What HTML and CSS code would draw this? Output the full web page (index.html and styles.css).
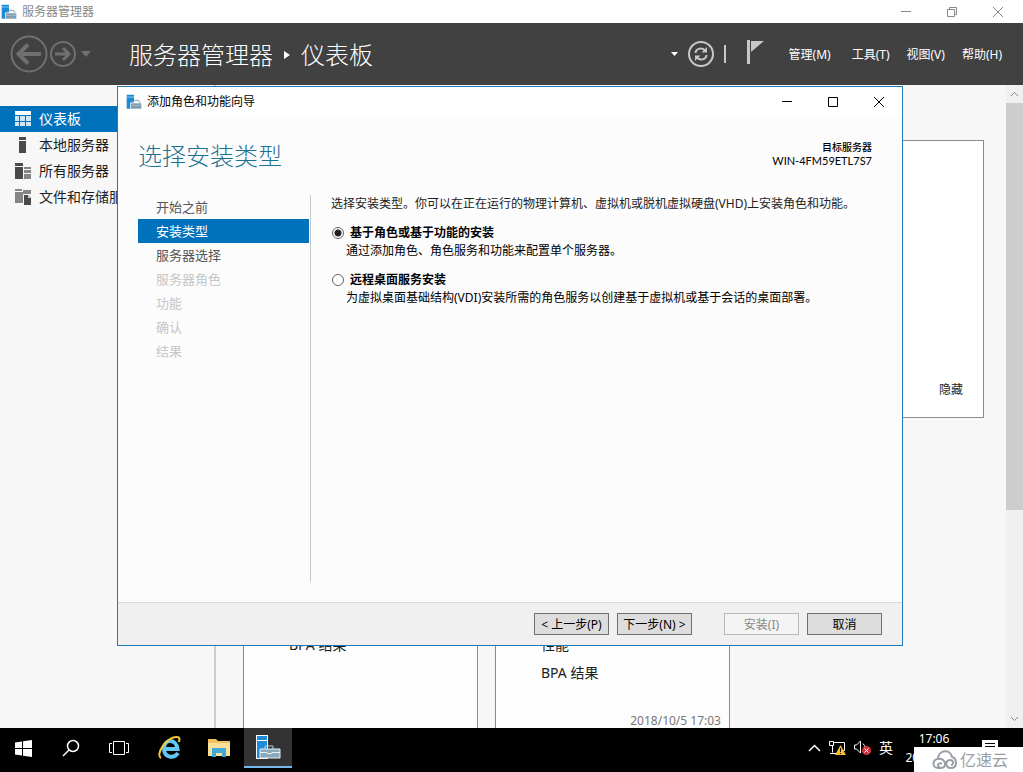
FILE: index.html
```html
<!DOCTYPE html>
<html lang="zh-CN">
<head>
<meta charset="utf-8">
<title>服务器管理器</title>
<link rel="stylesheet" href="styles.css">
</head>
<body>
<svg class="defs" width="0" height="0" aria-hidden="true">
  <symbol id="server-kit" viewBox="0 0 24 24">
    <path d="M1 1h11v3H1z M1 5h11v8H8v9H1z" fill="#1d8bd8"/>
    <path d="M9 11h1v3h-1z" fill="#9fd3f5"/>
    <path d="M10 13.500q1-4 4-4h3q3 0 4 4" fill="none" stroke="#7b98ac" stroke-width="1.500"/>
    <path d="M6 13h18v10H6z" fill="#fff"/>
    <path d="M7 14h16v8H7z" fill="#7b9bb1"/>
    <path d="M7 17h6v1h4v-1h6" fill="none" stroke="#b9cdd9"/>
  </symbol>
</svg>
<div class="manager">
  <header class="titlebar">
    <svg class="app-icon" viewBox="0 0 24 24"><use href="#server-kit"/></svg>
    <span class="titlebar-name">服务器管理器</span>
    <button class="win-button" aria-label="最小化"><svg viewBox="0 0 12 12"><path d="M1 5.500h10"/></svg></button>
    <button class="win-button" aria-label="还原"><svg viewBox="0 0 12 12"><path d="M1.500 3.500h7v7h-7z M3.500 3.500v-2h7v7h-2"/></svg></button>
    <button class="win-button" aria-label="关闭"><svg viewBox="0 0 12 12"><path d="M1 1l10 10M11 1L1 11"/></svg></button>
  </header>
  <div class="banner">
    <div class="history">
      <button class="icon-button" aria-label="后退"><svg width="38" height="38" viewBox="0 0 38 38" fill="none" stroke="#707070"><circle cx="19" cy="19" r="17.500" stroke-width="2"/><path d="M31 19H9M18 9.500L8.500 19l9.500 9.500" stroke-width="4"/></svg></button>
      <button class="icon-button" aria-label="前进"><svg width="26" height="26" viewBox="0 0 26 26" fill="none" stroke="#707070"><circle cx="13" cy="13" r="12" stroke-width="2"/><path d="M5 13h14M13 7l6 6-6 6" stroke-width="3"/></svg></button>
      <button class="icon-button" aria-label="历史记录"><svg width="10" height="6" viewBox="0 0 10 6"><path d="M0 0h10L5 6z" fill="#707070"/></svg></button>
    </div>
    <h1 class="crumbs"><span>服务器管理器</span><svg width="6" height="8" viewBox="0 0 6 8"><path d="M0 0l6 4-6 4z" fill="#fff"/></svg><span>仪表板</span></h1>
    <div class="tools">
      <button class="icon-button" aria-label="更多"><svg width="7" height="4" viewBox="0 0 7 4"><path d="M0 0h7L3.500 4z" fill="#fff"/></svg></button>
      <button class="icon-button" aria-label="刷新"><svg width="26" height="26" viewBox="0 0 26 26" fill="none" stroke="#c8c8c8"><circle cx="13" cy="13" r="12" stroke-width="2"/><path d="M7.500 12c.5-5 7-6 10-2M18.500 14c-.5 5-7 6-10 2" stroke-width="2"/><path d="M19 6v5.500h-5.500zM7 20v-5.500h5.500z" fill="#c8c8c8" stroke="none"/></svg></button>
      <span class="divider"></span>
      <button class="icon-button" aria-label="通知"><svg width="18" height="24" viewBox="0 0 18 24"><path d="M1 0h3v24H1z" fill="#c8c8c8"/><path d="M5 1h13L5 12z" fill="#c8c8c8"/></svg></button>
    </div>
    <nav class="menu">
      <button>管理(M)</button><button>工具(T)</button><button>视图(V)</button><button>帮助(H)</button>
    </nav>
  </div>
  <div class="workspace">
    <nav class="sidebar">
      <a class="side-link active" href="#"><svg viewBox="0 0 16 16" fill="#fff"><path d="M0 0h16v4H0z"/><path d="M0 5h4v5H0zM5 5h5v5H5zM11 5h5v5h-5zM0 11h4v4H0zM5 11h5v4H5zM11 11h5v4h-5z" fill="#cfe6f6"/></svg>仪表板</a>
      <a class="side-link" href="#"><svg viewBox="0 0 16 16" fill="#4a4a4a"><path d="M4 0h7v3H4zM4 4h7v12H4z"/></svg>本地服务器</a>
      <a class="side-link" href="#"><svg viewBox="0 0 16 16" fill="#4a4a4a"><path d="M0 0h8v3H0zM0 4h8v12H0z"/><path d="M9 4h7v2H9zM9 7h7v3H9zM9 11h7v5H9z" fill="#858585"/></svg>所有服务器</a>
      <a class="side-link" href="#"><svg viewBox="0 0 16 16"><path d="M0 0h7v2H0zM0 3h8v11H0zM8 1h8v4H8z" fill="#858585"/><path d="M9 6h4l3 3v7H9z" fill="#4a4a4a"/><path d="M13 6l3 3h-3z" fill="#ccc"/></svg>文件和存储服务</a>
    </nav>
    <main class="dashboard">
      <section class="welcome"><button>隐藏</button></section>
      <div class="tiles">
        <section class="tile"><ul><li>BPA 结果</li></ul></section>
        <section class="tile"><ul><li>性能</li><li>BPA 结果</li></ul><time>2018/10/5 17:03</time></section>
      </div>
    </main>
    <div class="scrollbar">
      <button aria-label="向上滚动"><svg width="9" height="6" viewBox="0 0 9 6"><path d="M1 5l3.500-3.500L8 5"/></svg></button>
      <div class="track"><div class="thumb"></div></div>
      <button aria-label="向下滚动"><svg width="9" height="6" viewBox="0 0 9 6"><path d="M1 1l3.500 3.500L8 1"/></svg></button>
    </div>
  </div>

  <section class="wizard" role="dialog" aria-labelledby="wizard-name">
    <header class="wizard-bar">
      <svg class="app-icon" viewBox="0 0 24 24"><use href="#server-kit"/></svg>
      <span id="wizard-name" class="titlebar-name">添加角色和功能向导</span>
      <button class="win-button" aria-label="最小化"><svg viewBox="0 0 12 12"><path d="M1 5.500h10"/></svg></button>
      <button class="win-button" aria-label="最大化"><svg viewBox="0 0 12 12"><path d="M1.500 1.500h9v9h-9z"/></svg></button>
      <button class="win-button" aria-label="关闭"><svg viewBox="0 0 12 12"><path d="M1 1l10 10M11 1L1 11"/></svg></button>
    </header>
    <div class="wizard-head">
      <h2>选择安装类型</h2>
      <p class="target"><strong>目标服务器</strong><span>WIN-4FM59ETL7S7</span></p>
    </div>
    <div class="wizard-body">
      <ol class="steps">
        <li>开始之前</li><li class="current">安装类型</li><li>服务器选择</li><li class="off">服务器角色</li><li class="off">功能</li><li class="off">确认</li><li class="off">结果</li>
      </ol>
      <form class="choices">
        <p>选择安装类型。你可以在正在运行的物理计算机、虚拟机或脱机虚拟硬盘(VHD)上安装角色和功能。</p>
        <div class="choice">
          <input type="radio" name="kind" id="kind-role" checked><label for="kind-role">基于角色或基于功能的安装</label>
          <p>通过添加角色、角色服务和功能来配置单个服务器。</p>
        </div>
        <div class="choice">
          <input type="radio" name="kind" id="kind-rds"><label for="kind-rds">远程桌面服务安装</label>
          <p>为虚拟桌面基础结构(VDI)安装所需的角色服务以创建基于虚拟机或基于会话的桌面部署。</p>
        </div>
      </form>
    </div>
    <footer class="wizard-foot">
      <div class="pair"><button>&lt; 上一步(P)</button><button>下一步(N) &gt;</button></div>
      <div class="pair"><button disabled>安装(I)</button><button>取消</button></div>
    </footer>
  </section>
</div>

<footer class="taskbar">
  <button class="task" aria-label="开始"><svg width="17" height="17" viewBox="0 0 17 17" fill="#fff"><path d="M0 2.500l7-1V8H0zM8 1.300L17 0v8H8zM0 9h7v6.500l-7-1zM8 9h9v8l-9-1.300z"/></svg></button>
  <button class="task" aria-label="搜索"><svg width="18" height="18" viewBox="0 0 18 18" fill="none" stroke="#fff" stroke-width="1.500"><circle cx="11" cy="7" r="5.500"/><path d="M7 11l-6 6"/></svg></button>
  <button class="task" aria-label="任务视图"><svg width="20" height="15" viewBox="0 0 20 15" fill="none" stroke="#fff"><path d="M4.500.5h11v13h-11zM3 2.500H.5v9H3M17 2.500h2.500v9H17"/></svg></button>
  <button class="task wide" aria-label="Internet Explorer"><svg width="24" height="24" viewBox="0 0 24 24" fill="none"><path d="M20 17c-4 6-14 5-14-4.500S18 2 19.500 13H7" stroke="#62c8f2" stroke-width="4"/><path d="M3 22C-3 19 8 1 19 1c3 0 3 3 1.500 5" stroke="#f5c63b" stroke-width="2"/></svg></button>
  <button class="task folder" aria-label="文件资源管理器"><svg width="22" height="20" viewBox="0 0 22 20"><path d="M0 1h8l2 2h12v15H0z" fill="#f0c25c"/><path d="M0 5h22v13H0z" fill="#fbe09a"/><path d="M4 10h14v9h-4v-4H8v4H4z" fill="#40a9d8"/></svg></button>
  <button class="task running" aria-label="服务器管理器"><svg width="26" height="26" viewBox="0 0 26 26"><path d="M1 1h12v24H1z" fill="#fff"/><path d="M2 2h10v4H2zM2 7h10v17H2z" fill="#1d8bd8"/><path d="M10 15v-3h8v3" fill="none" stroke="#b7cbd8"/><path d="M5 15h20v9H5z" fill="#8aa9bc" stroke="#e6eff4"/><path d="M5 18.500h7v1h5v-1h8" fill="none" stroke="#e6eff4"/></svg></button>
  <div class="tray">
    <button class="icon-button" aria-label="显示隐藏的图标"><svg width="13" height="8" viewBox="0 0 13 8" fill="none" stroke="#fff" stroke-width="1.500"><path d="M1 7l5.500-5.500L12 7"/></svg></button>
    <button class="icon-button" aria-label="网络"><svg width="17" height="16" viewBox="0 0 17 16" fill="none" stroke="#fff"><path d="M4 2.500h11.500v8H10M3.500 6v6.500M1 13.500h7M.5 1.500h4v4h-4z"/><path d="M11.500 5l5.500 10H6z" fill="#f7bb2b" stroke="none"/><path d="M11.500 8v4M11.500 13v1" stroke="#111"/></svg></button>
    <button class="icon-button" aria-label="音量"><svg width="17" height="16" viewBox="0 0 17 16" fill="none" stroke="#fff"><path d="M.5 5h2l4-4v12l-4-4h-2zM9 3.500q2 2 1.500 4"/><circle cx="12.500" cy="10.500" r="4.500" fill="#d8303a" stroke="none"/><path d="M10.500 8.500l4 4M14.500 8.500l-4 4"/></svg></button>
    <button class="ime">英</button>
    <div class="clock"><span>17:06</span><span>2018/10/5</span></div>
    <button class="icon-button notes" aria-label="操作中心"><svg width="16" height="16" viewBox="0 0 16 16"><path d="M0 0h16v13h-4v3l-3-3H0z" fill="#fff"/><path d="M3 3.500h10M3 6.500h10M3 9.500h10" stroke="#000"/></svg></button>
  </div>
  <div class="watermark"><svg width="25" height="20" viewBox="0 0 25 20" fill="none" stroke="#9a9ea6" stroke-width="2"><path d="M10 18H6c-6 0-6-9 0-9 0-9 12-11 14-2 5 1 6 11-1 11-6 0-6-8-1-8 4 0 4 5 1 5M6 9c3-1 7 1 7 5 0 5-7 5-7 1 0-2 3-2 4-1"/></svg><span>亿速云</span></div>
</footer>
</body>
</html>
```
FILE: styles.css
```css
* { box-sizing: border-box; }
body {
  margin: 0;
  height: 100vh;
  display: flex;
  flex-direction: column;
  overflow: hidden;
  background: #000;
  color: #1e1e1e;
  font: 12px/18px "Noto Sans", "Noto Sans CJK SC", sans-serif;
}
h1, h2, p, ul, ol { margin: 0; padding: 0; font-weight: 400; list-style: none; }
button { font: inherit; color: inherit; background: none; border: 0; padding: 0; white-space: nowrap; }
svg { display: block; flex: none; }
.defs { position: absolute; }
.icon-button { display: grid; place-items: center; }

.manager { position: relative; flex: 1; min-height: 0; display: flex; flex-direction: column; background: #f7f7f7; }
.titlebar { display: flex; align-items: center; height: 23px; padding: 0 2px 0 1px; background: #fff; color: #888; }
.app-icon { width: 16px; height: 16px; }
.titlebar-name { flex: 1; padding-left: 5px; }
.win-button { width: 46px; height: 20px; display: grid; place-items: center; }
.win-button svg { width: 12px; height: 12px; fill: none; stroke: #888; }

.banner { display: flex; align-items: center; height: 62px; padding: 0 21px 0 10px; background: #414141; color: #fff; }
.history { display: flex; align-items: center; gap: 2px; width: 119px; }
.history button:last-child { margin-left: 3px; }
.crumbs { flex: 1; display: flex; align-items: center; gap: 11px; padding-top: 2px; font-size: 24px; line-height: 36px; font-weight: 300; white-space: nowrap; }
.tools { display: flex; align-items: center; gap: 10px; }
.divider { width: 2px; height: 18px; background: #c8c8c8; }
.tools button:last-child { margin: 0 25px 4px 10px; }
.menu { display: flex; gap: 17px; padding-top: 2px; }
.menu button:first-child { margin-right: 4px; }

.workspace { flex: 1; min-height: 0; display: flex; }
.sidebar { width: 216px; flex: none; padding-top: 21px; border-right: 2px solid #ccc; }
.side-link { display: flex; align-items: center; gap: 8px; height: 26px; padding-left: 15px; font-size: 14px; color: #1e1e1e; text-decoration: none; }
.side-link svg { width: 16px; height: 16px; }
.side-link.active { background: #0072bc; color: #fff; }
.dashboard { flex: 1; min-width: 0; padding: 55px 22px 0 27px; display: flex; flex-direction: column; gap: 24px; overflow: hidden; }
.welcome { flex: none; display: flex; align-items: flex-end; justify-content: flex-end; height: 278px; padding: 18px 20px; border: 1px solid #8c8c8c; background: #fff; }
.tiles { flex: 1; display: flex; gap: 17px; }
.tile { display: flex; flex-direction: column; width: 235px; padding: 188px 8px 0 45px; border: 1px solid #8c8c8c; border-bottom: 0; background: #fdfdfd; font-size: 14px; line-height: 28px; }
.tile time { margin-top: 28px; text-align: right; font-size: 12px; line-height: 12px; color: #777; }
.scrollbar { width: 17px; display: flex; flex-direction: column; background: #f0f0f0; }
.scrollbar button { height: 18px; display: grid; place-items: center; fill: none; stroke: #888; }
.track { flex: 1; }
.thumb { height: 67%; background: #cdcdcd; }

.wizard { position: absolute; inset: 86px 120px 82px 117px; display: flex; flex-direction: column; border: 1px solid #1f78b8; background: #fcfcfc; }
.wizard-bar { display: flex; align-items: center; height: 30px; padding-left: 8px; background: #fff; color: #000; }
.wizard-bar .win-button svg { stroke: #000; }
.wizard-head { display: flex; justify-content: space-between; align-items: flex-start; padding: 21px 30px 0 20px; }
.wizard-head h2 { font-size: 24px; line-height: 36px; font-weight: 300; color: #1c7090; }
.target { display: grid; padding-top: 3px; text-align: right; font-size: 11px; line-height: 13px; color: #000; }
.target strong { font-size: 10px; font-weight: 500; }
.target span { font-family: Lato, "Noto Sans", sans-serif; }
.wizard-body { flex: 1; display: flex; gap: 20px; padding: 21px 20px 20px; }
.steps { width: 173px; flex: none; border-right: 1px solid #c8c8c8; font-size: 13px; line-height: 24px; color: #555; }
.steps li { margin-right: 1px; padding-left: 18px; }
.steps .current { background: #0072bc; color: #fff; }
.steps .off { color: #c6c6c6; }
.choices { flex: 1; min-width: 0; color: #222; }
.choice { display: grid; grid-template-columns: 12px 1fr; column-gap: 7px; align-items: center; margin-top: 11px; color: #000; }
.choice label { font-weight: 700; }
.choice p { grid-column: 1 / -1; padding-left: 15px; }
.choice input { appearance: none; width: 12px; height: 12px; margin: 0 0 0 1px; border: 1px solid #666; border-radius: 50%; background: #fff; }
.choice input:checked { background: radial-gradient(circle, #222 3px, #fff 4px); }
.wizard-foot { display: flex; justify-content: flex-end; gap: 32px; padding: 10px 20px; border-top: 1px solid #dadada; background: #f0f0f0; color: #000; }
.pair { display: flex; gap: 8px; }
.pair button { width: 75px; height: 22px; padding-top: 1px; line-height: 18px; border: 1px solid #707070; background: #ddd; }
.pair button:disabled { border-color: #b8b8b8; background: #f4f4f4; color: #888; }

.taskbar { position: relative; display: flex; height: 44px; padding-bottom: 4px; background: #000; color: #fff; }
.task { width: 48px; display: grid; place-items: center; }
.task:first-child { width: 47px; }
.task.wide { width: 53px; }
.task.folder { padding-right: 2px; }
.task.running { background: #333; border-bottom: 2px solid #76b9ed; }
.tray { flex: 1; display: flex; align-items: center; justify-content: flex-end; gap: 8px; padding-right: 25px; }
.ime { font-size: 14px; }
.clock { display: grid; width: 66px; margin-right: 7px; text-align: center; line-height: 19px; }
.watermark { position: absolute; right: 0; bottom: 0; width: 109px; height: 25px; display: flex; align-items: center; gap: 3px; padding-left: 18px; background: #fff; color: #9a9ea6; font-size: 16px; line-height: 24px; }
```
